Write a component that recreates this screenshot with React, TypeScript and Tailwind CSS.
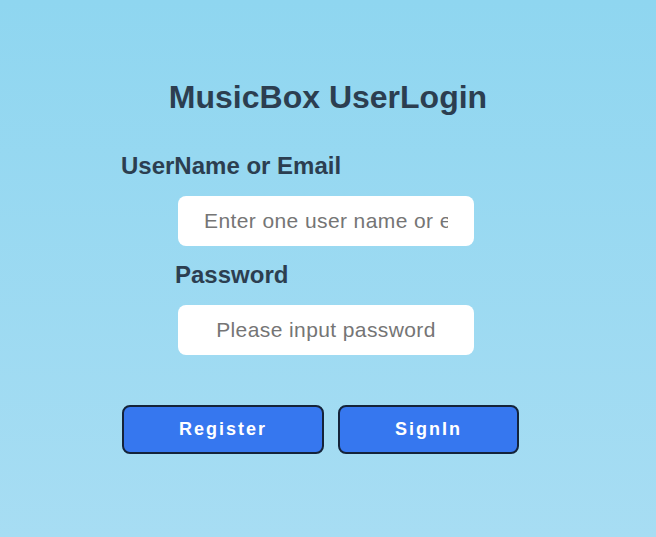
import React from "react";

const App: React.FC = () => {
  return (
    <div
      className="w-[656px] h-[537px] bg-gradient-to-b from-[#8fd6f0] to-[#a7ddf3] overflow-hidden"
      style={{ fontFamily: '"Liberation Sans", Arial, sans-serif' }}
    >
      <div className="pt-[78px] flex flex-col">
        <h1 className="text-center text-[32px] leading-[38px] font-bold text-[#2c3e50]">
          MusicBox UserLogin
        </h1>
        <label className="mt-[36px] ml-[121px] text-[24px] leading-[28px] font-bold text-[#2c3e50]">
          UserName or Email
        </label>
        <input
          className="mt-[16px] ml-[178px] w-[296px] h-[50px] rounded-lg bg-white px-[26px] text-center text-[21px] tracking-[0.4px] text-gray-700 placeholder:text-[#757575] outline-none"
          placeholder="Enter one user name or email"
        />
        <label className="mt-[15px] ml-[175px] text-[24px] leading-[28px] font-bold text-[#2c3e50]">
          Password
        </label>
        <input
          type="password"
          className="mt-[16px] ml-[178px] w-[296px] h-[50px] rounded-lg bg-white px-[26px] text-center text-[21px] tracking-[0.4px] text-gray-700 placeholder:text-[#757575] outline-none"
          placeholder="Please input password"
        />
        <div className="mt-[50px] ml-[122px] flex gap-[14px]">
          <button className="w-[202px] h-[49px] rounded-lg border-2 border-[#14233a] bg-[#3677ef] text-white text-[18px] font-bold tracking-[2px]">
            Register
          </button>
          <button className="w-[181px] h-[49px] rounded-lg border-2 border-[#14233a] bg-[#3677ef] text-white text-[18px] font-bold tracking-[2px]">
            SignIn
          </button>
        </div>
      </div>
    </div>
  );
};

export default App;
